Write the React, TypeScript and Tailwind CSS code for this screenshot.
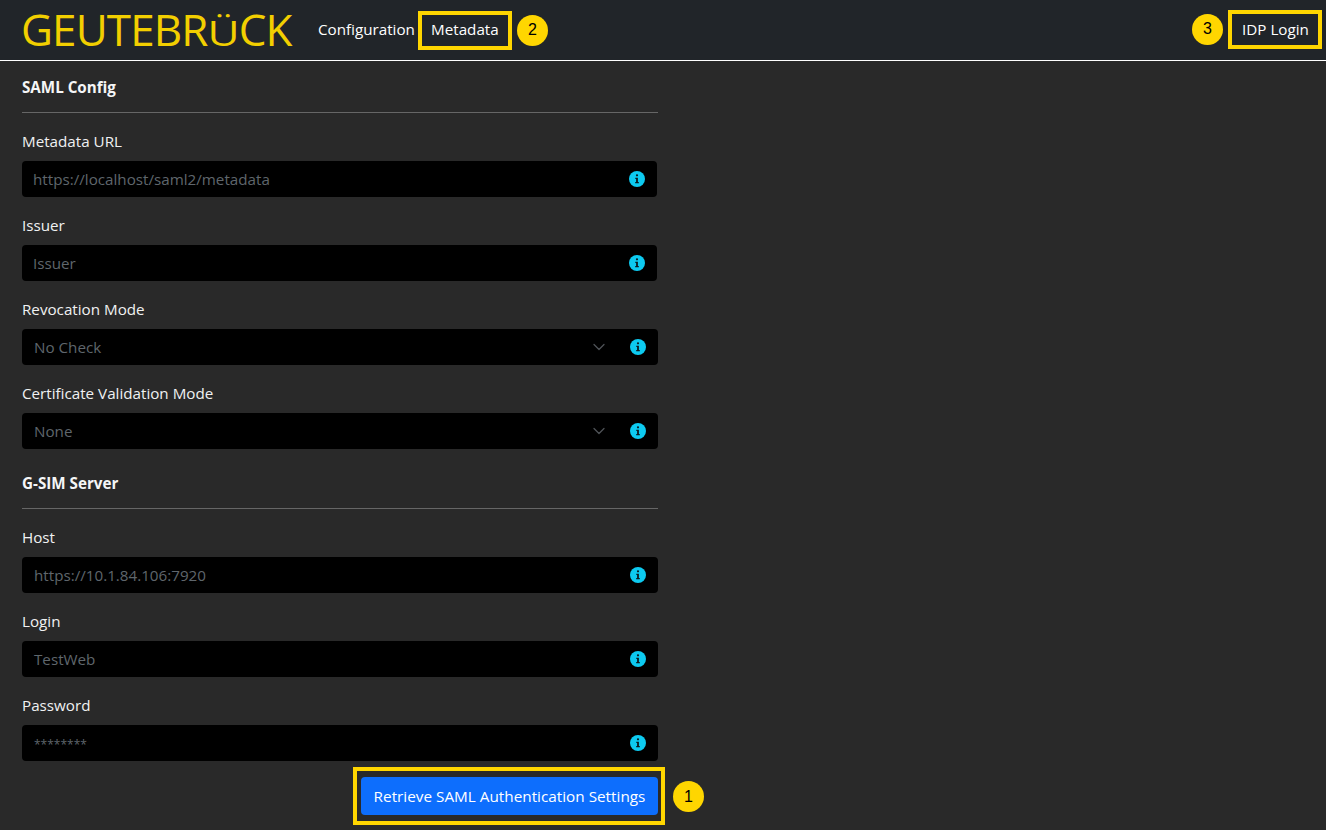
import { ChevronDown } from 'lucide-react';

const font = { fontFamily: '"Open Sans", "Noto Sans", sans-serif' };

function InfoIcon() {
  return (
    <svg width="16" height="16" viewBox="0 0 16 16" className="shrink-0">
      <circle cx="8" cy="8" r="8" fill="#0dcaf0" />
      <path
        d="M8 3.2a1.1 1.1 0 1 1 0 2.2 1.1 1.1 0 0 1 0-2.2ZM6.3 6.7h2.6v4.4h.9v1.2H6.2v-1.2h.9V7.9h-.8V6.7Z"
        fill="#0b1a20"
      />
    </svg>
  );
}

function Badge({ n }: { n: number }) {
  return (
    <span className="flex h-[31px] w-[31px] shrink-0 items-center justify-center rounded-full bg-[#ffd600] text-base text-black [font-family:'Liberation_Sans',sans-serif]">
      {n}
    </span>
  );
}

interface FieldProps {
  label: string;
  value: string;
  select?: boolean;
  wide?: boolean;
  masked?: boolean;
}

function Field({ label, value, select, wide, masked }: FieldProps) {
  return (
    <div className={wide ? 'w-[636px]' : 'w-[635px]'}>
      <label className="block h-[48px] pt-[16px] text-[15.2px] leading-[24px] text-[#f0f1f2]">{label}</label>
      <div className="flex h-[36px] items-center rounded-[4px] bg-black pr-[12px]">
        <span className={wide ? 'flex-1 pl-[12px] text-[15.2px] text-[#5f666c]' : 'flex-1 pl-[11px] text-[15.2px] text-[#5f666c]'}>
          {masked ? <span className="text-[12px] leading-none">{value}</span> : value}
        </span>
        {select && <ChevronDown size={20} strokeWidth={1.5} className="mr-[21px] text-[#4f5357]" />}
        <InfoIcon />
      </div>
    </div>
  );
}

function SectionTitle({ children }: { children: string }) {
  return (
    <div className="w-[636px]">
      <h5 className="h-[51px] pt-[14px] text-[15.2px] font-bold leading-[24px] text-[#f5f6f7]">{children}</h5>
      <div className="h-px bg-[#666]" />
    </div>
  );
}

export default function App() {
  return (
    <div style={font} className="h-[830px] w-[1326px] overflow-hidden bg-[#292929]">
      <nav className="flex h-[61px] items-center border-b border-white bg-[#212529] pl-[21px] pr-[4px] text-[15.2px] text-white">
        <div className="w-[273px] -translate-y-[1px] text-[44px] font-medium leading-[60px] tracking-[-0.9px] whitespace-nowrap text-[#f2cf00]">
          GEUTEBR<span className="inline-block origin-[50%_80%] scale-y-[0.77]">Ü</span>CK
        </div>
        <a className="ml-[24px] mr-[3px] -translate-y-[1px]">Configuration</a>
        <a className="flex h-[39px] w-[94px] items-center justify-center border-4 border-[#ffd600] pb-[2px]">Metadata</a>
        <span className="ml-[5px]">
          <Badge n={2} />
        </span>
        <span className="ml-auto mr-[5px] -translate-y-[1px]">
          <Badge n={3} />
        </span>
        <a className="flex h-[39px] w-[94px] -translate-y-[1px] items-center justify-center border-4 border-[#ffd600] pl-[1px]">IDP Login</a>
      </nav>

      <main className="pl-[22px]">
        <SectionTitle>SAML Config</SectionTitle>
        <Field label="Metadata URL" value="https://localhost/saml2/metadata" />
        <Field label="Issuer" value="Issuer" />
        <Field label="Revocation Mode" value="No Check" select wide />
        <Field label="Certificate Validation Mode" value="None" select wide />
        <div className="h-[8px]" />
        <SectionTitle>G-SIM Server</SectionTitle>
        <Field label="Host" value="https://10.1.84.106:7920" wide />
        <Field label="Login" value="TestWeb" wide />
        <Field label="Password" value="********" wide masked />

        <div className="relative mt-[6px] flex w-[636px] justify-end">
          <div className="-mr-[7px] border-4 border-[#ffd600] py-[6px] pl-[4px] pr-[3px]">
            <button className="h-[38px] w-[297px] rounded-[4px] bg-[#0d6efd] pt-[1px] text-[15.3px] text-white">
              Retrieve SAML Authentication Settings
            </button>
          </div>
          <span className="absolute left-[651px] top-[14px]">
            <Badge n={1} />
          </span>
        </div>
      </main>
    </div>
  );
}
